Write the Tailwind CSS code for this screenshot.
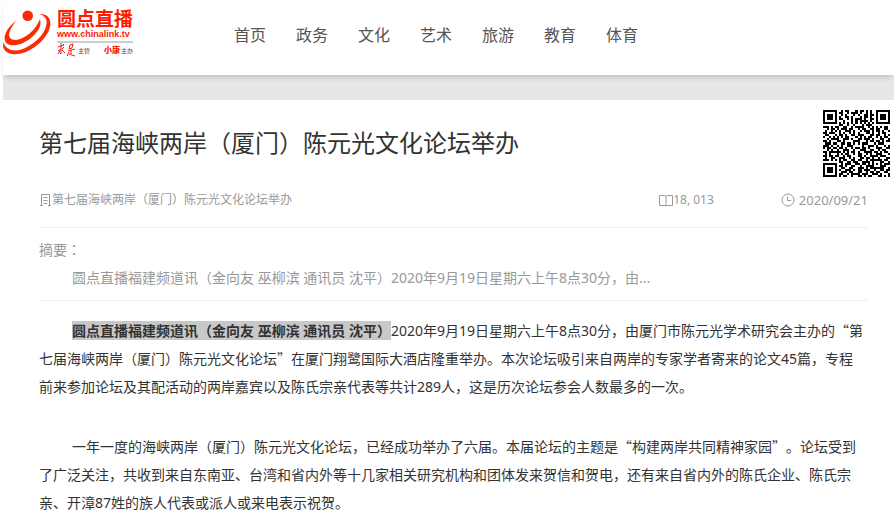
<!DOCTYPE html>
<html lang="zh-CN">
<head>
    <meta charset="UTF-8">
    <meta name="viewport" content="width=device-width, initial-scale=1.0">
    <title>第七届海峡两岸（厦门）陈元光文化论坛举办</title>
    <script src="https://cdn.jsdelivr.net/npm/@tailwindcss/browser@4"></script>
    <style>
        body {
            font-family: "Noto Sans CJK SC", sans-serif;
            text-spacing-trim: space-all;
        }
        .num {
            font-family: "Noto Sans", "Noto Sans CJK SC", sans-serif;
        }
        /* full-width quotes */
        .q {
            font-family: "Noto Sans CJK SC", sans-serif;
            line-height: 1;
        }
    </style>
</head>
<body class="bg-white text-[#333] pl-[3px]">
    <header class="relative flex items-start h-[75px] bg-white shadow-[0_4px_6px_-2px_rgba(0,0,0,0.18)]">
        <a href="#" class="flex w-[216px] pt-2 text-[#ff1a00]">
            <svg class="w-[50px] h-[50px] shrink-0" viewBox="3 8 50 50" fill="#fb2c05">
                <circle cx="27.700" cy="15.700" r="5.300"/>
                <path d="M39 14 C48 13 53 20 49 30 C43 45 24 56 12 54 C5 53 2 48 3 42 C7 52 17 52.500 28 46.500 C40 40 47.500 29 46.500 21 C46 17 43 15 39 14Z"/>
                <path d="M16 21 C9 26 3 34 5 41 C8 48 21 46 31 38 C38 32 42 26 40 19 C36 30 25 39 16 40 C9 40 8 35 10 31 C11 27 14 24 16 21Z"/>
            </svg>
            <span class="ml-1 w-[76px]">
                <span class="block text-[19px] leading-5 font-bold whitespace-nowrap">圆点直播</span>
                <span class="block mb-px text-[9px] leading-3 font-bold font-['Liberation_Sans']">www.chinalink.tv</span>
                <span class="flex items-center border-t-2 border-[#ccc] h-4 text-[6px] text-[#444] whitespace-nowrap">
                    <svg class="w-5 h-4 mr-px" viewBox="0 0 20 16" fill="none" stroke="#e8201a" stroke-width="1">
                        <path d="M1 5 L7 3 M4 1 L4 12 L3 11 M1 9 L3 8 M4 7 L1 12 M5 8 L8 11 M7 5 L5 7 M6 2 L7 3"/>
                        <path d="M13 3 L16 2 L15 6 L12 7 Z M11 9 L18 7 M14 8 L14 12 M12 10 L10 14 M12 12 L18 14"/>
                    </svg>
                    <span>主管</span>
                    <span class="ml-auto mr-px text-[8px] font-black text-[#ff1a00]">小康</span>
                    <span>主办</span>
                </span>
            </span>
        </a>
        <nav class="flex gap-[30px] pl-[15px] pt-[22px] text-base leading-6 text-[#555] whitespace-nowrap">
            <a href="#">首页</a>
            <a href="#">政务</a>
            <a href="#">文化</a>
            <a href="#">艺术</a>
            <a href="#">旅游</a>
            <a href="#">教育</a>
            <a href="#">体育</a>
        </nav>
    </header>
    <div class="h-[25px] bg-[#e6e7e9]"></div>

    <main class="relative pl-9 pr-[26px] pt-6">
        <svg id="qr" class="absolute right-1 top-[10px] w-[67px] h-[67px]" viewBox="0 0 33 33" shape-rendering="crispEdges" role="img" aria-label="二维码"></svg>
        <h1 class="pr-16 text-2xl leading-9">第七届海峡两岸（厦门）陈元光文化论坛举办</h1>

        <div class="num flex items-center mt-7 pb-[15px] border-b border-[#f0f0f0] text-xs leading-6 text-[#999]">
            <span class="flex items-center">
                <svg class="w-[13px] h-[13px]" viewBox="0 0 13 13" fill="none" stroke="#999">
                    <path d="M2.500 11.500 V.5 H10.500 V11.500 M1 11.500 H4 M9 11.500 H12 M4.500 3.500 H8.500 M4.500 6.500 H8.500 M4.500 9.500 H8.500"/>
                </svg>
                <span>第七届海峡两岸（厦门）陈元光文化论坛举办</span>
            </span>
            <span class="ml-auto flex items-center">
                <svg class="w-[14px] h-[13px]" viewBox="0 0 14 13" fill="none" stroke="#999">
                    <path d="M.5 1.500 H6 L7 2.500 L8 1.500 H13.500 V11.500 H8 L7 12 L6 11.500 H.5 Z M7 2 V12"/>
                </svg>
                <span>18, 013</span>
            </span>
            <span class="ml-[67px] flex items-center">
                <svg class="w-[14px] h-[14px] mr-1" viewBox="0 0 14 14" fill="none" stroke="#999">
                    <circle cx="7" cy="7" r="6"/>
                    <path d="M6.500 3.500 V7.500 H10"/>
                </svg>
                <time class="text-[13px]" datetime="2020-09-21">2020/09/21</time>
            </span>
        </div>

        <section class="num py-2 border-b border-[#f0f0f0] text-sm leading-7 text-[#999]">
            <p>摘要<span lang="zh-TW" class="font-['Noto_Sans_CJK_TC'] leading-none">：</span></p>
            <p class="indent-[33px]">圆点直播福建频道讯（金向友 巫柳滨 通讯员 沈平）2020年9月19日星期六上午8点30分，由...</p>
        </section>

        <article class="num pt-4 pr-[3px] space-y-8 text-sm leading-7">
            <p class="indent-[33px]"><strong class="bg-[#c8c8c8]">圆点直播福建频道讯（金向友 巫柳滨 通讯员 沈平）</strong>2020年9月19日星期六上午8点30分，由厦门市陈元光学术研究会主办的<span class="q">“</span>第七届海峡两岸（厦门）陈元光文化论坛<span class="q">”</span>在厦门翔鹭国际大酒店隆重举办。本次论坛吸引来自两岸的专家学者寄来的论文45篇，专程前来参加论坛及其配活动的两岸嘉宾以及陈氏宗亲代表等共计289人，这是历次论坛参会人数最多的一次。</p>
            <p class="indent-[33px]">一年一度的海峡两岸（厦门）陈元光文化论坛，已经成功举办了六届。本届论坛的主题是<span class="q">“</span>构建两岸共同精神家园<span class="q">”</span>。论坛受到了广泛关注，共收到来自东南亚、台湾和省内外等十几家相关研究机构和团体发来贺信和贺电，还有来自省内外的陈氏企业、陈氏宗亲、开漳87姓的族人代表或派人或来电表示祝贺。</p>
        </article>
    </main>

    <script>
        const rows = [
            "#######..#.##...#.##.#.#..#######",
            "#.....#.##..#.###.#..#.#..#.....#",
            "#.###.#..#.#...#.#..##.##.#.###.#",
            "#.###.#.#..##.#...#.##.#..#.###.#",
            "#.###.#.##..#.#.###.#..##.#.###.#",
            "#.....#...#...#.#.####.#..#.....#",
            "#######.#.#.#.#.#.#.#.#.#.#######",
            "........##..#..#...#.###.........",
            "###.#.##..##..#.####..#.#.#.#.##.",
            "..#.##.#.###.##..#.##..##.##..##.",
            ".#..#.#.#..###.#..#.###.#.##.#..#",
            "##.###..#.#..#.#.#...##.#..#.##..",
            ".##...#.##.#..##.###...##.##..#.#",
            "#..#.#.#.#.##...#.#.#.##..#.#.##.",
            "..#.####..###.#..##.###.#...##..#",
            "##.#...##.#....###...#.##.##.#.##",
            ".###.##..##.##.#.#.###...#.###...",
            "###.#..#.#..###....#..###.#...#.#",
            "#.##.##.##.#..#.##.##.#...###..##",
            "..#.#..#..###..#..###..##..#.##..",
            "##.######.#.#.##.#..####.##.#.##.",
            ".#.#...#.#.##..#.##..#.#..###...#",
            "##.##.##..#.##...##.#..####.###..",
            ".#..##..###..#.#..##.##.#..#...##",
            "###.#.#.#.##..##.##..#.######.##.",
            "........##..##.##..####.#...##..#",
            "#######..#.###..##.##.#.#.#.#.###",
            "#.....#.##.#..##..#..####...###..",
            "#.###.#..##..##..###.#.#######..#",
            "#.###.#.#..###.#.##.###..#..##.##",
            "#.###.#..###.##..##..#.##.##..##.",
            "#.....#.##..#.####.###..###.#...#",
            "#######.#.##..#..##.#.##...##.#.#"
        ];
        let d = "";
        rows.forEach((row, y) => {
            [...row].forEach((cell, x) => {
                if (cell === "#") d += `M${x} ${y}h1v1h-1z`;
            });
        });
        document.getElementById("qr").innerHTML = `<path d="${d}"/>`;
    </script>
</body>
</html>
